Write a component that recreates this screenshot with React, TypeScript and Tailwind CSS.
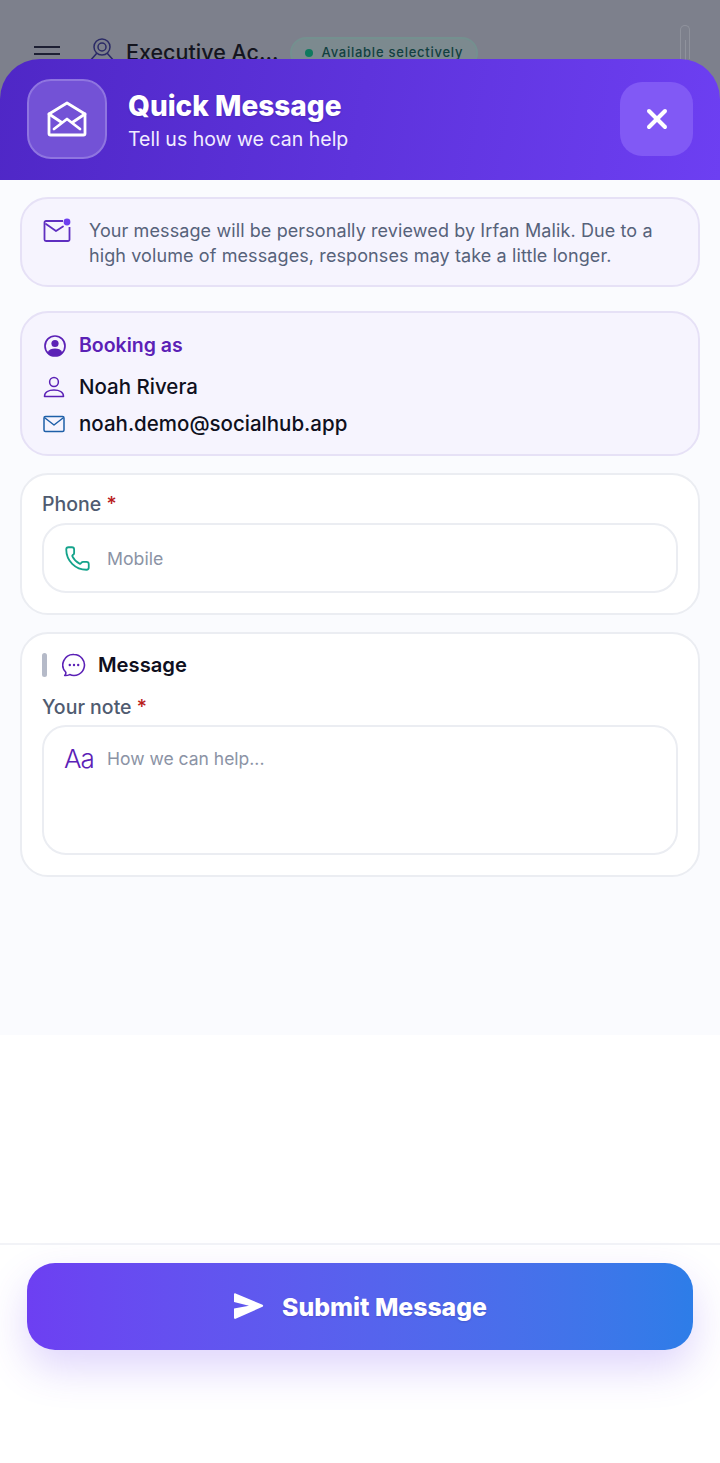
import { Phone, X } from "lucide-react";

function MailOpenIcon() {
  return (
    <svg width="40" height="36" viewBox="0 0 40 36" fill="none" stroke="#fff" strokeWidth="2.800" strokeLinejoin="round" strokeLinecap="round">
      <path d="M2 13 20 2l18 11v19.500a1.500 1.500 0 0 1-1.500 1.500h-33A1.500 1.500 0 0 1 2 32.500Z" />
      <path d="M2 13l12 8M38 13l-12 8M7 28l13-10 13 10" />
    </svg>
  );
}

function NoticeMailIcon() {
  return (
    <svg width="28" height="24" viewBox="0 0 28 24" fill="none">
      <path d="M20 3H3a1.500 1.500 0 0 0-1.500 1.500v17A1.500 1.500 0 0 0 3 23h22a1.500 1.500 0 0 0 1.500-1.500V9" stroke="#5f2fc0" strokeWidth="1.800" />
      <path d="M3 6l10 7 7-4.500" stroke="#5f2fc0" strokeWidth="1.800" strokeLinecap="round" strokeLinejoin="round" />
      <circle cx="24" cy="4" r="3.400" fill="#6d3ff0" />
    </svg>
  );
}

function BookingIcon() {
  return (
    <svg width="24" height="24" viewBox="0 0 24 24" fill="none">
      <circle cx="12" cy="12" r="10" stroke="#5b21b6" strokeWidth="1.700" />
      <circle cx="12" cy="9.500" r="3.600" fill="#5b21b6" />
      <path d="M4.600 18.500C6 15.500 9 14.600 12 14.600s6 .9 7.400 3.900A10 10 0 0 1 12 22a10 10 0 0 1-7.400-3.500Z" fill="#5b21b6" />
    </svg>
  );
}

function PersonIcon() {
  return (
    <svg width="22" height="22" viewBox="0 0 22 22" fill="none" stroke="#5b21b6" strokeWidth="1.500">
      <circle cx="11" cy="6" r="4.400" />
      <path d="M1.500 20.500c0-4.200 4.200-6.500 9.500-6.500s9.500 2.300 9.500 6.500Z" strokeLinejoin="round" />
    </svg>
  );
}

function MailIcon() {
  return (
    <svg width="22" height="18" viewBox="0 0 22 18" fill="none" stroke="#1e5fa8" strokeWidth="1.500" strokeLinejoin="round" strokeLinecap="round">
      <rect x="1" y="1.500" width="20" height="15" rx="1.500" />
      <path d="M2 3l9 7 9-7" />
    </svg>
  );
}

function ChatIcon() {
  return (
    <svg width="24" height="24" viewBox="0 0 24 24" fill="none">
      <path d="M12 1.500a10.500 10.500 0 1 1-4.300 20.100c-1.500.7-3.300 1-5 .9 .9-.9 1.300-2 1.100-3.200A10.500 10.500 0 0 1 12 1.500Z" stroke="#5b21b6" strokeWidth="1.600" strokeLinejoin="round" />
      <circle cx="7.800" cy="12" r="1.200" fill="#5b21b6" />
      <circle cx="12" cy="12" r="1.200" fill="#5b21b6" />
      <circle cx="16.200" cy="12" r="1.200" fill="#5b21b6" />
    </svg>
  );
}

function SendIcon() {
  return (
    <svg width="31" height="27" viewBox="0 0 31 27" fill="#fff">
      <path d="M1 1.500c0-.9.800-1.400 1.600-1L29.500 11.800c.9.400.9 1.600 0 2L2.600 25.800c-.8.400-1.600-.1-1.600-1V15.500L16 12.700 1 9Z" />
    </svg>
  );
}

export default function App() {
  return (
    <div className="flex h-[1463px] w-[720px] flex-col overflow-hidden bg-[#7d808c] font-['Inter',sans-serif]">
      {/* dimmed page behind the sheet */}
      <div className="flex h-[59px] shrink-0 items-start pt-[25px] pr-[30px] pl-[34px]">
        <div className="mt-[21px] flex w-[26px] flex-col gap-[5px]">
          <span className="h-[2px] bg-[#1d1f33]" />
          <span className="h-[2px] bg-[#1d1f33]" />
          <span className="h-[2px] bg-[#1d1f33]" />
        </div>
        <svg className="mt-[13px] ml-[30px]" width="24" height="32" viewBox="0 0 24 32" fill="none" stroke="#2b2a66" strokeWidth="1.500">
          <circle cx="12" cy="9" r="8" />
          <circle cx="12" cy="9" r="4" />
          <path d="M7 15 0 23M17 15l7 8" />
        </svg>
        <span className="mt-[12px] ml-[12px] text-[21.500px] leading-[30px] font-medium whitespace-nowrap text-[#14151f]">Executive Ac...</span>
        <div className="mt-[12px] ml-[11px] flex h-[32px] items-center gap-[9px] rounded-full border-2 border-[#74908f] bg-[#7c8a8f] px-[13px]">
          <span className="size-[8px] rounded-full bg-[#10795f]" />
          <span className="text-[13px] font-medium tracking-[0.75px] whitespace-nowrap text-[#11403f]">Available selectively</span>
        </div>
        <div className="ml-auto flex h-[34px] w-[10px] justify-center rounded-t-full border border-b-0 border-[#8f929c] pt-[14px]">
          <span className="h-[20px] w-px bg-[#8f929c]" />
        </div>
      </div>

      {/* sheet */}
      <div className="relative flex flex-1 flex-col overflow-hidden rounded-t-[40px]">
        <header className="flex h-[121px] shrink-0 items-center bg-[linear-gradient(100deg,#4f27c6,#6d3ff2)] pr-[27px] pb-[2px] pl-[27px]">
          <div className="flex size-[80px] items-center justify-center rounded-[24px] border-2 border-[#8f75e0] bg-[#7352d6]">
            <MailOpenIcon />
          </div>
          <div className="ml-[21px] flex-1 pt-[3px]">
            <h1 className="text-[28px] leading-[34px] font-extrabold text-white [text-shadow:0_1px_2px_rgba(30,10,90,0.25)]">Quick Message</h1>
            <p className="mt-[3px] text-[19.500px] leading-[26px] text-[#f1ecff]">Tell us how we can help</p>
          </div>
          <button className="flex h-[74px] w-[73px] items-center justify-center rounded-[22px] bg-[#8159f5]">
            <X size={32} color="#fff" strokeWidth={3} />
          </button>
        </header>

        <div className="flex h-[855px] shrink-0 flex-col bg-[#fafbfe] px-[20px] pt-[17px]">
          <div className="flex h-[90px] rounded-[28px] border-2 border-[#e6e1f6] bg-[#f6f4fe] pt-[19px] pl-[21px]">
            <NoticeMailIcon />
            <p className="ml-[18px] w-[590px] text-[18px] leading-[25px] font-normal tracking-[0.1px] text-[#56627a]">
              Your message will be personally reviewed by Irfan Malik. Due to a high volume of messages, responses may take a little longer.
            </p>
          </div>

          <div className="mt-[24px] flex h-[145px] flex-col rounded-[28px] border-2 border-[#e6e1f6] bg-[#f6f4fe] pt-[21px] pl-[21px]">
            <div className="flex h-[24px] items-center gap-[12px]">
              <BookingIcon />
              <span className="text-[19.500px] font-semibold text-[#5b21b6]">Booking as</span>
            </div>
            <div className="mt-[17px] flex h-[24px] items-center gap-[14px]">
              <PersonIcon />
              <span className="text-[20.500px] font-medium text-[#0f1020]">Noah Rivera</span>
            </div>
            <div className="mt-[13px] flex h-[24px] items-center gap-[14px]">
              <MailIcon />
              <span className="text-[20.500px] font-medium text-[#0f1020]">noah.demo@socialhub.app</span>
            </div>
          </div>

          <div className="mt-[17px] flex h-[142px] flex-col rounded-[28px] border-2 border-[#ebedf2] bg-white px-[20px] pt-[17px]">
            <div className="h-[24px] text-[19.500px] leading-[24px] font-medium text-[#4f5b70]">
              Phone <span className="text-[#b91c1c]">*</span>
            </div>
            <div className="mt-[7px] flex h-[70px] items-center rounded-[24px] border-2 border-[#ebedf2] pl-[20px]">
              <Phone size={27} color="#14a38b" strokeWidth={1.600} />
              <span className="ml-[16px] pt-[2px] text-[17.700px] text-[#8b93a5]">Mobile</span>
            </div>
          </div>

          <div className="mt-[17px] flex h-[245px] flex-col rounded-[28px] border-2 border-[#ebedf2] bg-white px-[20px] pt-[19px]">
            <div className="flex h-[24px] items-center">
              <span className="h-[24px] w-[5px] rounded-full bg-[#b5bac8]" />
              <span className="ml-[15px]"><ChatIcon /></span>
              <span className="ml-[12px] text-[20.200px] font-semibold text-[#0f1020]">Message</span>
            </div>
            <div className="mt-[18px] h-[24px] text-[19.500px] leading-[24px] font-medium text-[#4f5b70]">
              Your note <span className="text-[#b91c1c]">*</span>
            </div>
            <div className="mt-[6px] flex h-[130px] items-start rounded-[24px] border-2 border-[#ebedf2] pt-[16px] pl-[20px]">
              <span className="w-[43px] text-[26px] leading-[32px] font-light tracking-[-1px] text-[#5b21b6]">Aa</span>
              <span className="text-[17.500px] leading-[32px] text-[#8b93a5]">How we can help...</span>
            </div>
          </div>
        </div>

        <div className="flex-1 bg-white" />

        <footer className="h-[220px] shrink-0 border-t-2 border-[#f2f3f7] bg-white px-[27px] pt-[18px]">
          <button className="flex h-[87px] w-full items-center justify-center gap-[18px] rounded-[28px] bg-gradient-to-r from-[#6d3ff2] to-[#2d7de8] shadow-[0_18px_40px_rgba(109,63,242,0.22)]">
            <SendIcon />
            <span className="pt-[2px] text-[24.800px] font-extrabold text-white [text-shadow:0_1px_2px_rgba(30,10,90,0.2)]">Submit Message</span>
          </button>
        </footer>
      </div>
    </div>
  );
}
